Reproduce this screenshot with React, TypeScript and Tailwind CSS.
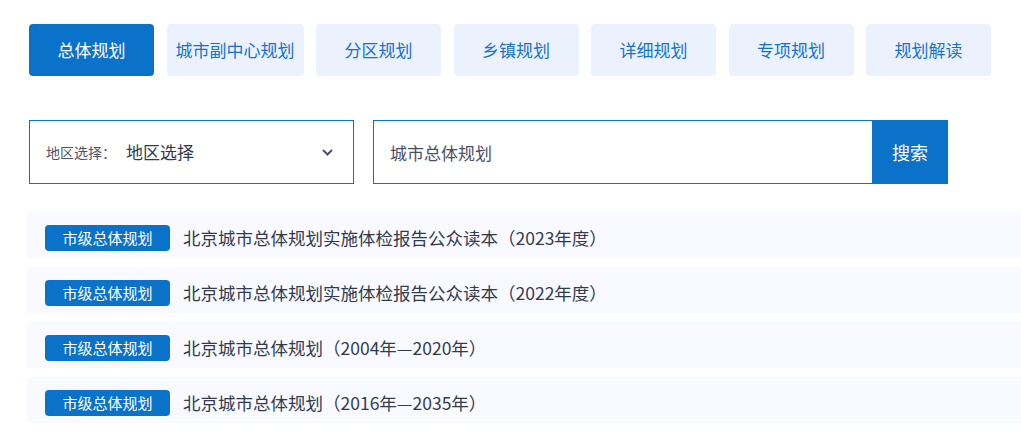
import { useState } from 'react';

const tabs = ['总体规划', '城市副中心规划', '分区规划', '乡镇规划', '详细规划', '专项规划', '规划解读'];

const items = [
  '北京城市总体规划实施体检报告公众读本（2023年度）',
  '北京城市总体规划实施体检报告公众读本（2022年度）',
  '北京城市总体规划（2004年—2020年）',
  '北京城市总体规划（2016年—2035年）',
];

export default function App() {
  const [active, setActive] = useState(0);
  const [keyword, setKeyword] = useState('城市总体规划');

  return (
    <div
      className="w-[1021px] h-[440px] overflow-hidden bg-white pl-[29px] pt-6"
      style={{ fontFamily: '"Noto Sans CJK SC", "Noto Sans", sans-serif' }}
    >
      {/* 顶部分类 */}
      <div className="flex gap-[12.5px]">
        {tabs.map((t, i) => (
          <button
            key={t}
            onClick={() => setActive(i)}
            className={
              'h-[52px] rounded text-[17px] flex items-center justify-center shrink-0 ' +
              (i === 1 ? 'w-[137px] ' : 'w-[125px] ') +
              (i === active ? 'bg-[#0b72c9] text-white' : 'bg-[#ebf2fe] text-[#1673cc]')
            }
          >
            {t}
          </button>
        ))}
      </div>

      {/* 搜索 */}
      <div className="flex mt-[44px]">
        <div className="w-[325px] h-16 border border-[#0b72c9] flex items-center pl-4 pr-[20px]">
          <span className="text-[14px] text-[#4f5566]">地区选择：</span>
          <span className="ml-[10px] text-[17px] text-[#333a4e]">地区选择</span>
          <svg className="ml-auto" width="11" height="7" viewBox="0 0 11 7">
            <polyline points="1,1 5.5,5.5 10,1" fill="none" stroke="#4a5070" strokeWidth="2" />
          </svg>
        </div>
        <div className="ml-[19px] flex">
          <input
            value={keyword}
            onChange={(e) => setKeyword(e.target.value)}
            className="w-[499px] h-16 border border-r-0 border-[#0b72c9] pl-4 text-[17px] text-[#4a5066] outline-none"
          />
          <button className="w-[76px] h-16 bg-[#0b72c9] text-white text-[18px]">搜索</button>
        </div>
      </div>

      {/* 列表 */}
      <div className="mt-7 -ml-[2px] flex flex-col gap-[9px]">
        {items.map((it) => (
          <div key={it} className="w-[1100px] h-[46px] bg-[#f8faff] flex items-center pl-[18px] pt-[6px]">
            <span className="w-[125px] h-[26px] rounded bg-[#0b72c9] text-white text-[15px] flex items-center justify-center">
              市级总体规划
            </span>
            <span className="ml-[13px] text-[17.5px] text-[#333a4e]">{it}</span>
          </div>
        ))}
      </div>
    </div>
  );
}
